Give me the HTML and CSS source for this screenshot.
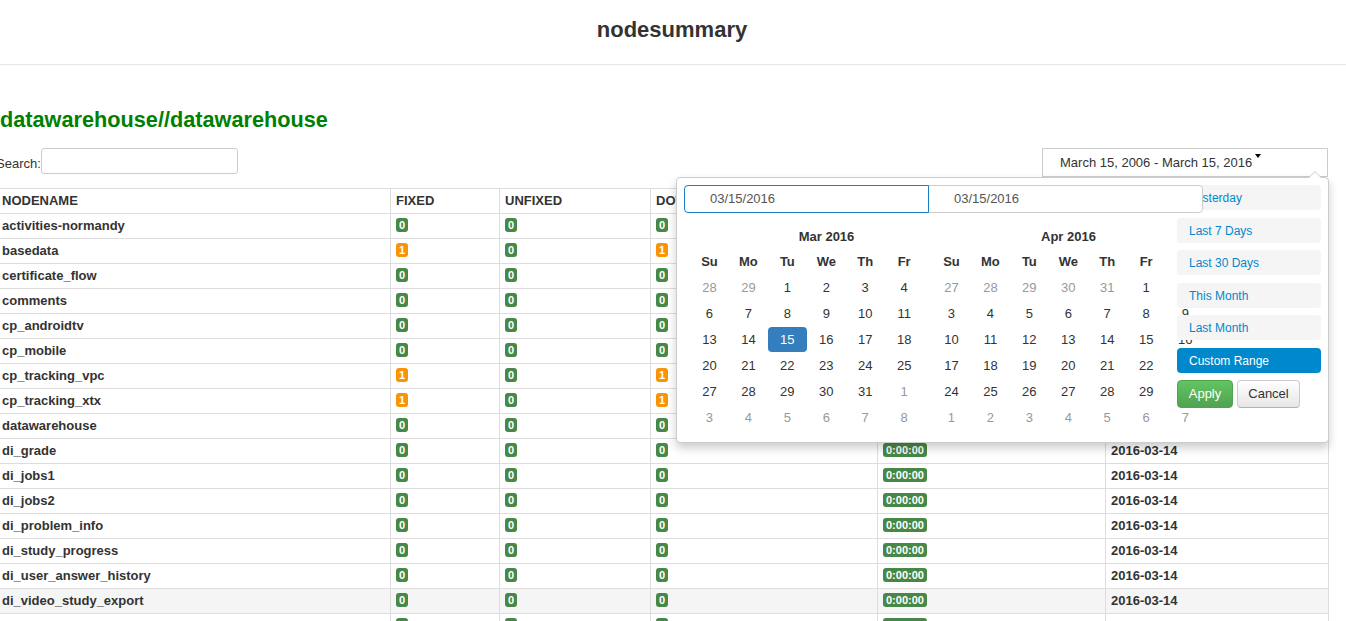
FILE: index.html
```html
<!DOCTYPE html>
<html>
<head>
<meta charset="utf-8">
<title>nodesummary</title>
<link rel="stylesheet" href="styles.css">
</head>
<body>
<header class="topbar"><h1 class="brand">nodesummary</h1></header>
<main class="main">
  <h2 class="title">datawarehouse//datawarehouse</h2>
  <div class="toolbar">
    <label class="search">Search:<input class="search-input" type="text"></label>
    <div class="range">
      <div class="range-btn">March 15, 2006 - March 15, 2016<span class="caret"></span></div>
      <div class="picker">
        <div class="inputs">
          <div class="dinput focus">03/15/2016</div>
          <div class="dinput second">03/15/2016</div>
        </div>
        <div class="cals">
          <div class="cal">
            <table class="ctable">
              <tr><th class="month" colspan="7">Mar 2016</th></tr>
              <tr class="dow"><th>Su</th><th>Mo</th><th>Tu</th><th>We</th><th>Th</th><th>Fr</th><th>Sa</th></tr>
              <tr><td class="off">28</td><td class="off">29</td><td>1</td><td>2</td><td>3</td><td>4</td><td>5</td></tr>
              <tr><td>6</td><td>7</td><td>8</td><td>9</td><td>10</td><td>11</td><td>12</td></tr>
              <tr><td>13</td><td>14</td><td><span class="sel">15</span></td><td>16</td><td>17</td><td>18</td><td>19</td></tr>
              <tr><td>20</td><td>21</td><td>22</td><td>23</td><td>24</td><td>25</td><td>26</td></tr>
              <tr><td>27</td><td>28</td><td>29</td><td>30</td><td>31</td><td class="off">1</td><td class="off">2</td></tr>
              <tr><td class="off">3</td><td class="off">4</td><td class="off">5</td><td class="off">6</td><td class="off">7</td><td class="off">8</td><td class="off">9</td></tr>
            </table>
          </div>
          <div class="cal cal2">
            <table class="ctable">
              <tr><th class="month" colspan="7">Apr 2016</th></tr>
              <tr class="dow"><th>Su</th><th>Mo</th><th>Tu</th><th>We</th><th>Th</th><th>Fr</th><th>Sa</th></tr>
              <tr><td class="off">27</td><td class="off">28</td><td class="off">29</td><td class="off">30</td><td class="off">31</td><td>1</td><td>2</td></tr>
              <tr><td>3</td><td>4</td><td>5</td><td>6</td><td>7</td><td>8</td><td>9</td></tr>
              <tr><td>10</td><td>11</td><td>12</td><td>13</td><td>14</td><td>15</td><td>16</td></tr>
              <tr><td>17</td><td>18</td><td>19</td><td>20</td><td>21</td><td>22</td><td>23</td></tr>
              <tr><td>24</td><td>25</td><td>26</td><td>27</td><td>28</td><td>29</td><td>30</td></tr>
              <tr><td class="off">1</td><td class="off">2</td><td class="off">3</td><td class="off">4</td><td class="off">5</td><td class="off">6</td><td class="off">7</td></tr>
            </table>
          </div>
        </div>
        <div class="ranges">
          <div class="rbtn">Yesterday</div>
          <div class="rbtn">Last 7 Days</div>
          <div class="rbtn">Last 30 Days</div>
          <div class="rbtn">This Month</div>
          <div class="rbtn">Last Month</div>
          <div class="rbtn active">Custom Range</div>
          <div class="actions">
            <div class="btn apply">Apply</div>
            <div class="btn cancel">Cancel</div>
          </div>
        </div>
      </div>
    </div>
  </div>
  <table class="grid">
    <colgroup><col class="c1"><col class="c2"><col class="c3"><col class="c4"><col class="c5"><col class="c6"></colgroup>
    <thead>
      <tr><th>NODENAME</th><th>FIXED</th><th>UNFIXED</th><th>DOWNTIME</th><th>DURATION</th><th>DATE</th></tr>
    </thead>
    <tbody>
      <tr><td>activities-normandy</td><td><span class="lbl ok">0</span></td><td><span class="lbl ok">0</span></td><td><span class="lbl ok">0</span></td><td><span class="lbl ok">0:00:00</span></td><td>2016-03-14</td></tr>
      <tr><td>basedata</td><td><span class="lbl warn">1</span></td><td><span class="lbl ok">0</span></td><td><span class="lbl warn">1</span></td><td><span class="lbl ok">0:00:00</span></td><td>2016-03-14</td></tr>
      <tr><td>certificate_flow</td><td><span class="lbl ok">0</span></td><td><span class="lbl ok">0</span></td><td><span class="lbl ok">0</span></td><td><span class="lbl ok">0:00:00</span></td><td>2016-03-14</td></tr>
      <tr><td>comments</td><td><span class="lbl ok">0</span></td><td><span class="lbl ok">0</span></td><td><span class="lbl ok">0</span></td><td><span class="lbl ok">0:00:00</span></td><td>2016-03-14</td></tr>
      <tr><td>cp_androidtv</td><td><span class="lbl ok">0</span></td><td><span class="lbl ok">0</span></td><td><span class="lbl ok">0</span></td><td><span class="lbl ok">0:00:00</span></td><td>2016-03-14</td></tr>
      <tr><td>cp_mobile</td><td><span class="lbl ok">0</span></td><td><span class="lbl ok">0</span></td><td><span class="lbl ok">0</span></td><td><span class="lbl ok">0:00:00</span></td><td>2016-03-14</td></tr>
      <tr><td>cp_tracking_vpc</td><td><span class="lbl warn">1</span></td><td><span class="lbl ok">0</span></td><td><span class="lbl warn">1</span></td><td><span class="lbl ok">0:00:00</span></td><td>2016-03-14</td></tr>
      <tr><td>cp_tracking_xtx</td><td><span class="lbl warn">1</span></td><td><span class="lbl ok">0</span></td><td><span class="lbl warn">1</span></td><td><span class="lbl ok">0:00:00</span></td><td>2016-03-14</td></tr>
      <tr><td>datawarehouse</td><td><span class="lbl ok">0</span></td><td><span class="lbl ok">0</span></td><td><span class="lbl ok">0</span></td><td><span class="lbl ok">0:00:00</span></td><td>2016-03-14</td></tr>
      <tr><td>di_grade</td><td><span class="lbl ok">0</span></td><td><span class="lbl ok">0</span></td><td><span class="lbl ok">0</span></td><td><span class="lbl ok">0:00:00</span></td><td>2016-03-14</td></tr>
      <tr><td>di_jobs1</td><td><span class="lbl ok">0</span></td><td><span class="lbl ok">0</span></td><td><span class="lbl ok">0</span></td><td><span class="lbl ok">0:00:00</span></td><td>2016-03-14</td></tr>
      <tr><td>di_jobs2</td><td><span class="lbl ok">0</span></td><td><span class="lbl ok">0</span></td><td><span class="lbl ok">0</span></td><td><span class="lbl ok">0:00:00</span></td><td>2016-03-14</td></tr>
      <tr><td>di_problem_info</td><td><span class="lbl ok">0</span></td><td><span class="lbl ok">0</span></td><td><span class="lbl ok">0</span></td><td><span class="lbl ok">0:00:00</span></td><td>2016-03-14</td></tr>
      <tr><td>di_study_progress</td><td><span class="lbl ok">0</span></td><td><span class="lbl ok">0</span></td><td><span class="lbl ok">0</span></td><td><span class="lbl ok">0:00:00</span></td><td>2016-03-14</td></tr>
      <tr><td>di_user_answer_history</td><td><span class="lbl ok">0</span></td><td><span class="lbl ok">0</span></td><td><span class="lbl ok">0</span></td><td><span class="lbl ok">0:00:00</span></td><td>2016-03-14</td></tr>
      <tr class="hover"><td>di_video_study_export</td><td><span class="lbl ok">0</span></td><td><span class="lbl ok">0</span></td><td><span class="lbl ok">0</span></td><td><span class="lbl ok">0:00:00</span></td><td>2016-03-14</td></tr>
      <tr><td>dw_base_info</td><td><span class="lbl ok">0</span></td><td><span class="lbl ok">0</span></td><td><span class="lbl ok">0</span></td><td><span class="lbl ok">0:00:00</span></td><td>2016-03-14</td></tr>
    </tbody>
  </table>
</main>
</body>
</html>
```
FILE: styles.css
```css
html, body { margin: 0; padding: 0; }
body {
  font-family: "Liberation Sans", Arial, sans-serif;
  font-size: 13px;
  color: #333;
  background: #fff;
  overflow: hidden;
}
.topbar {
  height: 65px;
  border-bottom: 1px solid #e7e7e7;
  box-sizing: border-box;
  display: flex;
  justify-content: center;
  padding-top: 17px;
}
.brand {
  margin: 0;
  font-size: 22px;
  line-height: 26px;
  font-weight: bold;
  color: #333;
  height: 26px;
  position: relative;
  left: -1px;
}
.main {
  margin-left: -4px;
  width: 1332px;
  position: relative;
}
.title {
  margin: 42px 0 0 4px;
  font-size: 21.7px;
  line-height: 26px;
  font-weight: bold;
  color: #008000;
}
.toolbar {
  margin-top: 15px;
  display: flex;
  justify-content: space-between;
  align-items: flex-start;
}
.search {
  display: flex;
  align-items: center;
  font-size: 13px;
  height: 26px;
  padding-top: 2px;
  color: #333;
}
.search-input {
  width: 197px;
  height: 26px;
  box-sizing: border-box;
  border: 1px solid #ccc;
  border-radius: 3px;
  margin: 0;
  padding: 2px 6px;
  position: relative;
  top: -2px;
}
.range { position: relative; }
.range-btn {
  width: 286px;
  height: 29px;
  box-sizing: border-box;
  border: 1px solid #ccc;
  padding: 6px 0 0 17px;
  font-size: 13px;
  line-height: 15px;
  color: #333;
  background: #fff;
}
.caret {
  display: inline-block;
  width: 0;
  height: 0;
  border-top: 4px solid #000;
  border-left: 3px solid transparent;
  border-right: 3px solid transparent;
  vertical-align: top;
  margin: -1px 0 0 3px;
}
.picker {
  position: absolute;
  z-index: 10;
  top: 29px;
  right: -1px;
  width: 653px;
  height: 266px;
  box-sizing: border-box;
  background: #fff;
  border: 1px solid #ccc;
  border-radius: 4px;
  box-shadow: 0 5px 10px rgba(0,0,0,0.2);
  padding: 7px;
}
.picker::before {
  content: "";
  position: absolute;
  top: -7px;
  right: 6px;
  border-left: 7px solid transparent;
  border-right: 7px solid transparent;
  border-bottom: 7px solid #ccc;
}
.picker::after {
  content: "";
  position: absolute;
  top: -6px;
  right: 7px;
  border-left: 6px solid transparent;
  border-right: 6px solid transparent;
  border-bottom: 6px solid #fff;
}
.inputs {
  display: flex;
  position: relative;
  z-index: 3;
}
.dinput {
  height: 28px;
  box-sizing: border-box;
  border: 1px solid #ccc;
  background: #fff;
  padding-left: 25px;
  line-height: 26px;
  font-size: 13px;
  color: #555;
}
.dinput.focus {
  width: 245px;
  border-color: #1b7dc4;
  border-radius: 4px 0 0 4px;
  position: relative;
  z-index: 2;
}
.dinput.second {
  width: 275px;
  margin-left: -1px;
  border-radius: 0 4px 4px 0;
}
.cals {
  display: flex;
  margin: 10px 0 0 6px;
}
.cal {
  width: 242px;
  flex: none;
  background: #fff;
}
.cal2 { position: relative; }
.ctable {
  border-collapse: collapse;
  table-layout: fixed;
  width: 273px;
}
.ctable th, .ctable td {
  width: 39px;
  height: 26px;
  padding: 0;
  text-align: center;
  font-size: 13px;
  color: #333;
}
.ctable tr.dow th { height: 25px; }
.ctable th { font-weight: bold; }
.ctable td.off { color: #999; }
.ctable .sel {
  display: block;
  height: 25px;
  line-height: 25px;
  background: #357ebd;
  color: #fff;
  border-radius: 4px;
  margin-top: 1px;
}
.ranges {
  position: absolute;
  z-index: 2;
  top: 7px;
  left: 500px;
  width: 144px;
}
.rbtn {
  height: 25px;
  box-sizing: border-box;
  margin-bottom: 7.6px;
  background: #f5f5f5;
  border-radius: 4px;
  padding-left: 12px;
  line-height: 26px;
  font-size: 12px;
  color: #08c;
}
.rbtn.active { background: #08c; color: #fff; }
.actions {
  display: flex;
  gap: 4px;
  margin-top: -0.6px;
}
.btn {
  height: 28px;
  box-sizing: border-box;
  border-radius: 4px;
  font-size: 13px;
  line-height: 26px;
  text-align: center;
}
.apply {
  width: 56px;
  color: #fff;
  background: linear-gradient(#62c462, #51a351);
  border: 1px solid #51a351;
}
.cancel {
  width: 63px;
  color: #333;
  background: linear-gradient(#fff, #e6e6e6);
  border: 1px solid #ccc;
  border-bottom-color: #b3b3b3;
}
.grid {
  margin-top: 11px;
  width: 1332px;
  border-collapse: collapse;
  table-layout: fixed;
}
.c1 { width: 394px; }
.c2 { width: 109px; }
.c3 { width: 151px; }
.c4 { width: 227px; }
.c5 { width: 228px; }
.c6 { width: 223px; }
.grid th, .grid td {
  border: 1px solid #ddd;
  padding: 4px 5px;
  height: 16px;
  line-height: 16px;
  font-size: 13px;
  font-weight: bold;
  text-align: left;
  color: #333;
  white-space: nowrap;
  overflow: hidden;
}
.grid tr.hover td { background: #f5f5f5; }
.lbl {
  display: inline-block;
  font-size: 11px;
  line-height: 12px;
  padding: 1px 3px;
  border-radius: 3px;
  color: #fff;
  font-weight: bold;
  vertical-align: 1px;
}
.lbl.ok { background: #468847; }
.lbl.warn { background: #f89406; }
```
